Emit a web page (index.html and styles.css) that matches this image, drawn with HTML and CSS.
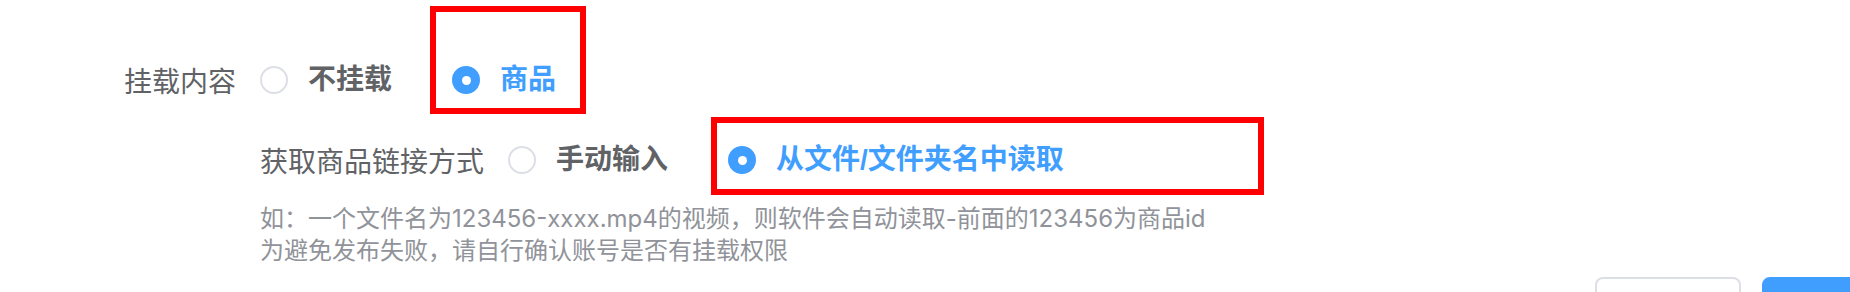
FILE: index.html
```html
<!DOCTYPE html>
<html lang="zh-CN">
<head>
    <meta charset="UTF-8"/>
    <title>挂载设置</title>
    <link rel="stylesheet" href="styles.css">
</head>
<body>
<div class="form">
    <div class="form-item">
        <label class="form-label">挂载内容</label>
        <div class="radio-group">
            <label class="radio">
                <span class="radio-input"></span>
                <span class="radio-label">不挂载</span>
            </label>
            <label class="radio is-checked">
                <span class="radio-input"></span>
                <span class="radio-label">商品</span>
                <span class="mark mark-goods"></span>
            </label>
        </div>
    </div>

    <div class="sub-item">
        <label class="sub-label">获取商品链接方式</label>
        <div class="radio-group">
            <label class="radio">
                <span class="radio-input"></span>
                <span class="radio-label">手动输入</span>
            </label>
            <label class="radio is-checked">
                <span class="radio-input"></span>
                <span class="radio-label">从文件/文件夹名中读取</span>
                <span class="mark mark-file"></span>
            </label>
        </div>
    </div>

    <div class="tip">
        <div>如：一个文件名为<span class="latin">123456-xxxx.mp4</span>的视频，则软件会自动读取<span class="latin">-</span>前面的<span class="latin">123456</span>为商品<span class="latin">id</span></div>
        <div>为避免发布失败，请自行确认账号是否有挂载权限</div>
    </div>

    <!-- 按钮在截图底部只露出上沿 -->
    <div class="footer">
        <button class="btn" aria-label="取消"></button>
        <button class="btn btn-primary" aria-label="确定"></button>
    </div>
</div>
</body>
</html>
```

FILE: styles.css
```css
html, body {
    margin: 0;
    overflow: hidden;
    background-color: #fff;
}

body {
    font-family: "Liberation Sans", "Noto Sans CJK SC", sans-serif;
    color: #606266;
}

.form {
    padding-top: 52px;
}

.form-item {
    display: flex;
    align-items: center;
    height: 56px;
}

.form-label {
    width: 260px;
    box-sizing: border-box;
    padding-right: 24px;
    text-align: right;
    font-size: 28px;
}

.radio-group {
    display: flex;
    align-items: center;
}

.radio {
    position: relative;
    display: inline-flex;
    align-items: center;
    margin-right: 60px;
    font-size: 28px;
    line-height: 28px;
    font-weight: bold;
    cursor: pointer;
}

.radio-input {
    width: 28px;
    height: 28px;
    box-sizing: border-box;
    border: 2px solid #dcdfe6;
    border-radius: 50%;
}

.radio-label {
    padding-left: 20px;
}

.is-checked .radio-input {
    display: flex;
    align-items: center;
    justify-content: center;
    background-color: #409eff;
    border-color: #409eff;
}

.is-checked .radio-input::after {
    content: "";
    width: 9px;
    height: 9px;
    border-radius: 50%;
    background-color: #fff;
}

.is-checked .radio-label {
    color: #409eff;
}

.sub-item {
    display: flex;
    align-items: center;
    height: 56px;
    margin: 24px 0 0 260px;
}

.sub-label {
    padding-right: 24px;
    font-size: 28px;
}

.tip {
    margin: 15px 0 0 260px;
    font-size: 24px;
    line-height: 32px;
    color: #909399;
}

.tip .latin {
    font-family: Inter, "Liberation Sans", sans-serif;
}

.footer {
    display: flex;
    justify-content: flex-end;
    gap: 21px;
    margin: 10px -58px 0 0;
}

.btn {
    width: 146px;
    height: 80px;
    border: 2px solid #dcdfe6;
    border-radius: 8px;
    background-color: #fff;
}

.btn-primary {
    background-color: #409eff;
    border-color: #409eff;
}

/* 红框标注 */
.mark {
    position: absolute;
    box-sizing: border-box;
    border: 6px solid #ff0000;
    pointer-events: none;
}

.mark-goods {
    left: -22px;
    top: -60px;
    width: 156px;
    height: 108px;
}

.mark-file {
    left: -17px;
    top: -29px;
    width: 553px;
    height: 78px;
}
```
